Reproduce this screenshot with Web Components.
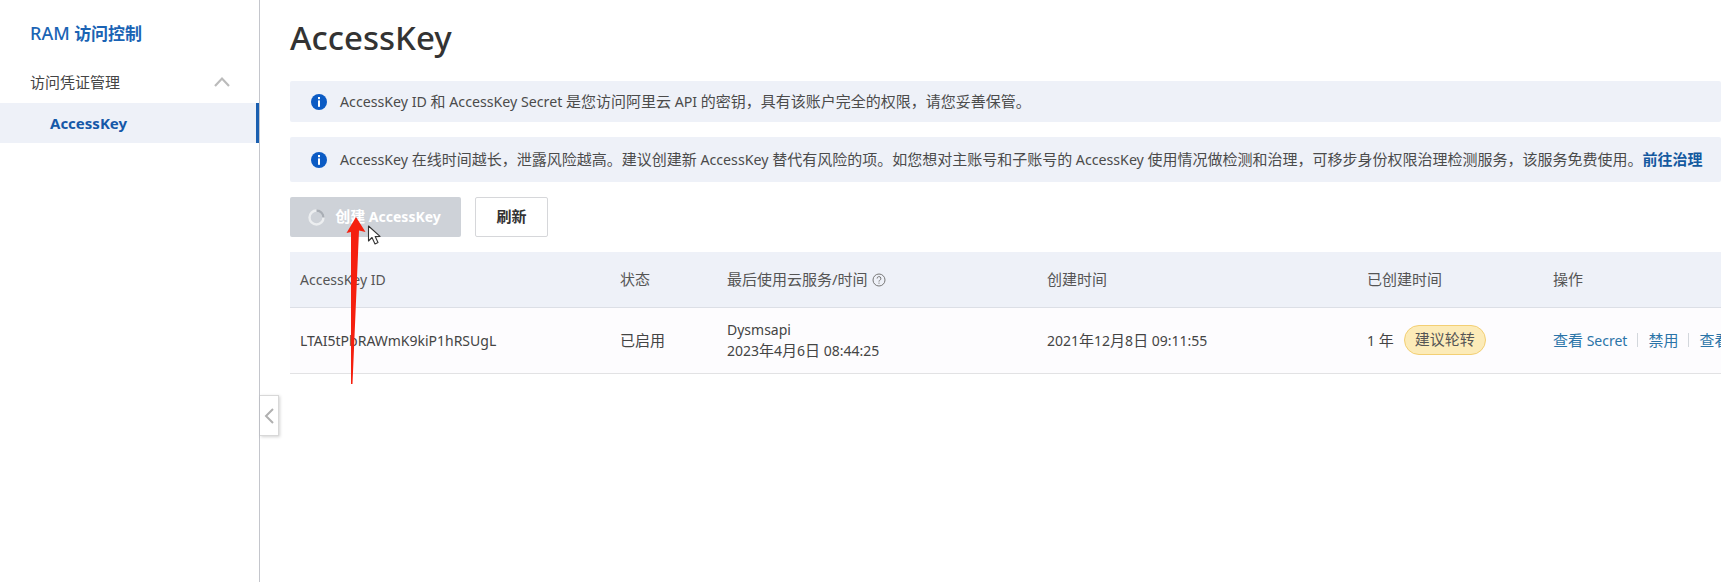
<!DOCTYPE html>
<html lang="zh-CN">
<head>
<meta charset="utf-8">
<title>AccessKey</title>
<style>
    html, body { margin: 0; height: 100%; background: #fff; overflow: hidden; }
    body { font-family: "Noto Sans", "Noto Sans CJK SC", sans-serif; color: #333; }
</style>
</head>
<body>
<ram-app></ram-app>

<script>
const ICON_INFO = `<svg width="16" height="16" viewBox="0 0 16 16"><circle cx="8" cy="8" r="8" fill="#0b5bc4"/><rect x="7" y="3" width="2" height="2.2" fill="#fff"/><rect x="7" y="6.4" width="2" height="6.4" fill="#fff"/></svg>`;

// chinese is 15px in the shot but latin runs look like 14px
const mix = (text) => text.replace(/[A-Za-z0-9 :]+/g, (m) => `<span class="en">${m}</span>`);

class RamApp extends HTMLElement {
    connectedCallback() {
        this.attachShadow({ mode: 'open' });
        this.shadowRoot.innerHTML = `
            <style>
                :host { display: flex; width: 1721px; height: 582px; position: relative; overflow: hidden; }
                main { flex: 1; min-width: 0; padding-left: 30px; display: flex; flex-direction: column; }
                ram-alert + ram-alert { margin-top: 15px; }
                .arrow { position: absolute; left: 0; top: 0; pointer-events: none; }
            </style>
            <ram-sidebar></ram-sidebar>
            <main>
                <page-title>AccessKey</page-title>
                <ram-alert style="--h: 41px" text="AccessKey ID 和 AccessKey Secret 是您访问阿里云 API 的密钥，具有该账户完全的权限，请您妥善保管。"></ram-alert>
                <ram-alert style="--h: 45px" text="AccessKey 在线时间越长，泄露风险越高。建议创建新 AccessKey 替代有风险的项。如您想对主账号和子账号的 AccessKey 使用情况做检测和治理，可移步身份权限治理检测服务，该服务免费使用。"><a>前往治理</a></ram-alert>
                <tool-bar></tool-bar>
                <key-table></key-table>
            </main>
            <svg class="arrow" width="1721" height="582" viewBox="0 0 1721 582">
                <polygon points="356,217 365.5,232 359,230.5 352.5,384 351,384 351,232 346.5,233" fill="#f5200f"/>
                <path d="M368.5 226 V241 L372 237.5 L375 244 L378 242.6 L375.2 236.6 L380 236.4 Z" fill="#fff" stroke="#333" stroke-width="1.1" stroke-linejoin="round"/>
            </svg>
        `;
    }
}

class RamSidebar extends HTMLElement {
    connectedCallback() {
        this.attachShadow({ mode: 'open' });
        this.shadowRoot.innerHTML = `
            <style>
                :host { display: flex; flex-direction: column; flex: none; width: 260px; height: 100%; box-sizing: border-box; border-right: 1px solid #c4c6cc; position: relative; }
                .title { padding: 21px 0 0 30px; height: 50px; box-sizing: border-box; font-size: 17px; line-height: 24px; color: #1a63b4; }
                .title span { font-size: 18px; font-weight: 500; }
                .title b { font-weight: 700; }
                .group { display: flex; align-items: center; justify-content: space-between; height: 41px; margin-top: 12px; padding: 0 29px 2px 30px; box-sizing: border-box; font-size: 15px; color: #444; }
                .item { height: 40px; background: #eef1f8; border-right: 3px solid #1a5fb0; padding-left: 50px; display: flex; align-items: center; font-size: 15px; font-weight: 700; color: #1558a8; }
                .toggle { position: absolute; left: 260px; top: 395px; width: 19px; height: 41px; box-sizing: border-box; background: #fff; border: 1px solid #d8d8d8; border-left: 0; box-shadow: 1px 1px 3px rgba(0,0,0,.18); display: flex; align-items: center; justify-content: center; }
            </style>
            <div class="title"><span>RAM</span> <b>访问控制</b></div>
            <div class="group">
                <span>访问凭证管理</span>
                <svg width="16" height="10" viewBox="0 0 16 10"><path d="M1 9 L8 1.6 L15 9" fill="none" stroke="#bbb" stroke-width="2.2"/></svg>
            </div>
            <div class="item">AccessKey</div>
            <div class="toggle">
                <svg width="10" height="16" viewBox="0 0 10 16"><path d="M9 1 L2 8 L9 15" fill="none" stroke="#b0b0b0" stroke-width="2"/></svg>
            </div>
        `;
    }
}

class PageTitle extends HTMLElement {
    connectedCallback() {
        this.attachShadow({ mode: 'open' });
        this.shadowRoot.innerHTML = `
            <style>
                :host { display: block; height: 81px; box-sizing: border-box; padding-top: 13px; font-size: 33px; font-weight: 500; line-height: 50px; color: #333; }
            </style>
            <slot></slot>
        `;
    }
}

class RamAlert extends HTMLElement {
    connectedCallback() {
        this.attachShadow({ mode: 'open' });
        this.shadowRoot.innerHTML = `
            <style>
                :host { display: flex; align-items: center; height: var(--h, 41px); background: #eef1f8; border-radius: 2px; padding-left: 21px; font-size: 15px; color: #4b4b4b; white-space: nowrap; }
                svg { flex: none; margin-right: 13px; }
                .text { padding-bottom: 3px; }
                .en { font-size: 14.2px; }
                ::slotted(a) { color: #13599f; font-weight: 700; }
            </style>
            ${ICON_INFO}
            <span class="text">${mix(this.getAttribute('text'))}<slot></slot></span>
        `;
    }
}

class ToolBar extends HTMLElement {
    connectedCallback() {
        this.attachShadow({ mode: 'open' });
        this.shadowRoot.innerHTML = `
            <style>
                :host { display: flex; gap: 14px; margin-top: 15px; height: 40px; }
                .btn { box-sizing: border-box; height: 40px; display: flex; align-items: center; justify-content: center; padding-bottom: 4px; font-size: 15px; font-weight: 700; border-radius: 2px; }
                .en { font-size: 14px; }
                .primary { width: 171px; background: #ced2d8; color: #fff; gap: 10px; padding-right: 2px; }
                .primary svg { margin-top: 4px; }
                .plain { width: 73px; background: #fff; border: 1px solid #d6d7da; color: #333; }
            </style>
            <div class="btn primary">
                <svg width="17" height="17" viewBox="0 0 17 17"><circle cx="8.5" cy="8.5" r="7" fill="none" stroke="#eceef0" stroke-width="2.4"/><path d="M8.5 1.5 A7 7 0 0 1 15.5 8.5" fill="none" stroke="#a9aeb5" stroke-width="2.4"/></svg>
                <span>${mix('创建 AccessKey')}</span>
            </div>
            <div class="btn plain">刷新</div>
        `;
    }
}

class KeyTable extends HTMLElement {
    connectedCallback() {
        this.attachShadow({ mode: 'open' });
        this.shadowRoot.innerHTML = `
            <style>
                :host { display: block; margin-top: 15px; font-size: 15px; color: #444; white-space: nowrap; }
                .en { font-size: 14px; }
                .row { display: grid; grid-template-columns: 320px 107px 320px 320px 186px 1fr; align-items: center; box-sizing: border-box; padding: 0 0 2px 10px; }
                .head { height: 56px; background: #eef1f8; border-bottom: 1px solid #dcdfe6; color: #555; }
                .body { height: 66px; background: #fdfcfe; border-bottom: 1px solid #e2e2e4; }
                .help { vertical-align: -2px; margin-left: 4px; }
                .two { line-height: 21px; }
                .age { display: flex; align-items: center; gap: 10px; }
                .tag { height: 30px; box-sizing: border-box; padding: 0 10px 3px; display: flex; align-items: center; border: 1px solid #f3cf74; border-radius: 15px; background: #fcebb8; color: #555; }
                .ops { color: #2b74a8; display: flex; align-items: center; overflow: hidden; }
                .sep { width: 1px; height: 14px; background: #d3d7dc; margin: 0 10px; flex: none; }
            </style>
            <div class="row head">
                <span>${mix('AccessKey ID')}</span>
                <span>状态</span>
                <span>最后使用云服务/时间<svg class="help" width="14" height="14" viewBox="0 0 14 14"><circle cx="7" cy="7" r="6" fill="none" stroke="#777" stroke-width="1"/><path d="M5.1 5.5 A1.9 1.9 0 1 1 7.6 7.3 Q7 7.6 7 8.6" fill="none" stroke="#777" stroke-width="1"/><rect x="6.5" y="9.6" width="1" height="1.1" fill="#777"/></svg></span>
                <span>创建时间</span>
                <span>已创建时间</span>
                <span>操作</span>
            </div>
            <div class="row body">
                <span>${mix('LTAI5tPbRAWmK9kiP1hRSUgL')}</span>
                <span>已启用</span>
                <span class="two">${mix('Dysmsapi')}<br>${mix('2023年4月6日 08:44:25')}</span>
                <span>${mix('2021年12月8日 09:11:55')}</span>
                <span class="age"><span>${mix('1 年')}</span><span class="tag">建议轮转</span></span>
                <span class="ops"><span>${mix('查看 Secret')}</span><i class="sep"></i>禁用<i class="sep"></i>查看</span>
            </div>
        `;
    }
}

customElements.define('ram-app', RamApp);
customElements.define('ram-sidebar', RamSidebar);
customElements.define('page-title', PageTitle);
customElements.define('ram-alert', RamAlert);
customElements.define('tool-bar', ToolBar);
customElements.define('key-table', KeyTable);
</script>
</body>
</html>
